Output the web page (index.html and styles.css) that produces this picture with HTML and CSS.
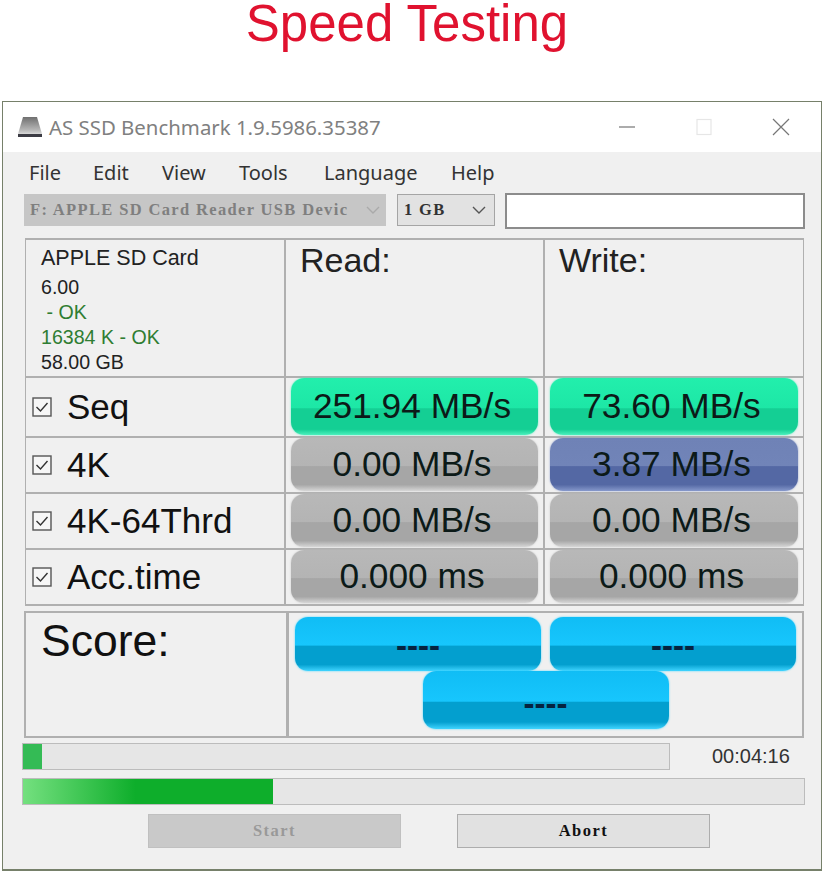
FILE: index.html
```html
<!DOCTYPE html>
<html lang="en">
<head>
    <meta charset="UTF-8">
    <meta name="viewport" content="width=device-width, initial-scale=1.0">
    <title>Speed Testing</title>
    <link rel="stylesheet" href="styles.css">
</head>
<body>

<h1 class="headline">Speed Testing</h1>

<div class="window">
    <!-- Title bar -->
    <div class="titlebar">
        <svg class="app-icon" width="26" height="22" viewBox="0 0 26 22">
            <defs>
                <linearGradient id="drive" x1="0" y1="0" x2="0" y2="1">
                    <stop offset="0" stop-color="#6f6f6f"/>
                    <stop offset="0.75" stop-color="#b5b5b5"/>
                    <stop offset="1" stop-color="#d8d8d8"/>
                </linearGradient>
            </defs>
            <path d="M6 1H20L25 18H1Z" fill="url(#drive)"/>
            <rect x="1" y="18" width="24" height="3" fill="#3c3c44"/>
        </svg>
        <span class="title-text">AS SSD Benchmark 1.9.5986.35387</span>
        <div class="window-controls">
            <svg width="18" height="18" viewBox="0 0 18 18"><path d="M1 9H17" stroke="#888" stroke-width="1.4"/></svg>
            <svg width="18" height="18" viewBox="0 0 18 18"><rect x="2" y="1.5" width="14" height="15" fill="none" stroke="#e6e6e6" stroke-width="1.2"/></svg>
            <svg width="18" height="18" viewBox="0 0 18 18"><path d="M1 1L17 17M17 1L1 17" stroke="#777" stroke-width="1.2"/></svg>
        </div>
    </div>

    <div class="content">
        <!-- Menu -->
        <div class="menu">
            <span class="m-file">File</span>
            <span class="m-edit">Edit</span>
            <span class="m-view">View</span>
            <span class="m-tools">Tools</span>
            <span class="m-lang">Language</span>
            <span>Help</span>
        </div>

        <!-- Drive and size selection -->
        <div class="selectors">
            <div class="combo combo-drive">
                <span>F: APPLE SD Card Reader USB Devic</span>
                <svg width="14" height="8" viewBox="0 0 14 8"><path d="M1 1L7 7L13 1" fill="none" stroke="#aaa" stroke-width="1.4"/></svg>
            </div>
            <div class="combo combo-size">
                <span>1 GB</span>
                <svg width="14" height="8" viewBox="0 0 14 8"><path d="M1 1L7 7L13 1" fill="none" stroke="#555" stroke-width="1.4"/></svg>
            </div>
            <div class="text-box"></div>
        </div>

        <!-- Results table -->
        <div class="results">
            <div class="cell info">
                <div class="info-name">APPLE SD Card</div>
                <div>6.00</div>
                <div class="ok">&nbsp;- OK</div>
                <div class="ok">16384 K - OK</div>
                <div>58.00 GB</div>
            </div>
            <div class="cell col-title">Read:</div>
            <div class="cell col-title">Write:</div>

            <div class="cell row-label"><span class="check"><svg width="20" height="20" viewBox="0 0 20 20"><rect x="1" y="1" width="18" height="18" fill="#f6f6f6" stroke="#555" stroke-width="1.4"/><path d="M4.5 10L8.5 14L15.5 6" fill="none" stroke="#333" stroke-width="1.4"/></svg></span>Seq</div>
            <div class="cell pill-cell"><div class="pill green">251.94 MB/s</div></div>
            <div class="cell pill-cell"><div class="pill green">73.60 MB/s</div></div>

            <div class="cell row-label"><span class="check"><svg width="20" height="20" viewBox="0 0 20 20"><rect x="1" y="1" width="18" height="18" fill="#f6f6f6" stroke="#555" stroke-width="1.4"/><path d="M4.5 10L8.5 14L15.5 6" fill="none" stroke="#333" stroke-width="1.4"/></svg></span>4K</div>
            <div class="cell pill-cell"><div class="pill grey">0.00 MB/s</div></div>
            <div class="cell pill-cell"><div class="pill blue">3.87 MB/s</div></div>

            <div class="cell row-label"><span class="check"><svg width="20" height="20" viewBox="0 0 20 20"><rect x="1" y="1" width="18" height="18" fill="#f6f6f6" stroke="#555" stroke-width="1.4"/><path d="M4.5 10L8.5 14L15.5 6" fill="none" stroke="#333" stroke-width="1.4"/></svg></span>4K-64Thrd</div>
            <div class="cell pill-cell"><div class="pill grey">0.00 MB/s</div></div>
            <div class="cell pill-cell"><div class="pill grey">0.00 MB/s</div></div>

            <div class="cell row-label"><span class="check"><svg width="20" height="20" viewBox="0 0 20 20"><rect x="1" y="1" width="18" height="18" fill="#f6f6f6" stroke="#555" stroke-width="1.4"/><path d="M4.5 10L8.5 14L15.5 6" fill="none" stroke="#333" stroke-width="1.4"/></svg></span>Acc.time</div>
            <div class="cell pill-cell"><div class="pill grey">0.000 ms</div></div>
            <div class="cell pill-cell"><div class="pill grey">0.000 ms</div></div>
        </div>

        <!-- Score -->
        <div class="score">
            <div class="cell score-label">Score:</div>
            <div class="cell score-values">
                <div class="score-pill">----</div>
                <div class="score-pill">----</div>
                <div class="score-pill score-total">----</div>
            </div>
        </div>

        <!-- Progress -->
        <div class="progress-row">
            <div class="bar bar-short"><div class="fill fill-small" style="width: 3%"></div></div>
            <span class="time">00:04:16</span>
        </div>
        <div class="bar bar-long"><div class="fill fill-fade" style="width: 32%"></div></div>

        <!-- Buttons -->
        <div class="buttons">
            <div class="btn btn-off">Start</div>
            <div class="btn">Abort</div>
        </div>
    </div>
</div>

</body>
</html>
```

FILE: styles.css
```css
body {
    margin: 0;
    background-color: #fff;
    font-family: "Noto Sans", "Open Sans", sans-serif;
    color: #222;
}
.headline {
    margin: 0;
    height: 101px;
    box-sizing: border-box;
    padding-right: 10px;
    font-family: "Liberation Sans", Arial, sans-serif;
    font-size: 51px;
    font-weight: normal;
    line-height: 48px;
    text-align: center;
    color: #e0122f;
}
.window {
    margin: 0 2px;
    height: 770px;
    box-sizing: border-box;
    border: 1px solid #76806a;
    border-bottom-width: 2px;
    background-color: #f0f0f0;
}

/* title bar */
.titlebar {
    height: 50px;
    display: flex;
    align-items: center;
    padding-left: 14px;
    background-color: #fff;
}
.app-icon {
    margin-right: 6px;
}
.title-text {
    font-size: 20.4px;
    color: #808080;
}
.window-controls {
    margin-left: auto;
    margin-right: 31px;
    display: flex;
    gap: 59px;
}

/* menu and selectors */
.content {
    padding: 0 15px 0 19px;
}
.menu {
    height: 41px;
    display: flex;
    align-items: center;
    padding-left: 7px;
    font-size: 20px;
    color: #333;
}
.m-file { width: 64px; }
.m-edit { width: 69px; }
.m-view { width: 77px; }
.m-tools { width: 85px; }
.m-lang { width: 127px; }
.selectors {
    display: flex;
    align-items: center;
    height: 36px;
    margin: 0 -2px 9px 2px;
    font-family: "Liberation Serif", serif;
    font-size: 16.5px;
    font-weight: bold;
}
.combo {
    height: 32px;
    margin-bottom: 2px;
    box-sizing: border-box;
    display: flex;
    align-items: center;
    justify-content: space-between;
    padding: 0 6px;
    letter-spacing: 1.35px;
}
.combo-drive {
    width: 362px;
    margin-right: 11px;
    background-color: #c6c6c6;
    color: #7f7f7f;
}
.combo-size {
    width: 98px;
    margin-right: 10px;
    background-color: #e2e2e2;
    border: 1px solid #a5a5a5;
    color: #333;
    padding-right: 8px;
}
.text-box {
    width: 300px;
    height: 36px;
    box-sizing: border-box;
    background-color: #fff;
    border: 2px solid #8c8c8c;
}

/* results */
.results {
    display: grid;
    grid-template-columns: 260px 259px 260px;
    grid-template-rows: 138px 60px 56px 56px 56px;
    width: 779px;
    margin-left: 3px;
    border-bottom: 2px solid #b0b0b0;
}
.cell {
    box-sizing: border-box;
    border: 2px solid #b0b0b0;
    border-width: 2px 1px 0 1px;
    min-width: 0;
}
.info {
    padding: 4px 0 0 15px;
    font-family: "Liberation Sans", Arial, sans-serif;
    font-size: 19.6px;
    line-height: 25px;
}
.info-name {
    font-size: 21.5px;
    line-height: 28px;
    margin-bottom: 3px;
}
.ok {
    color: #2f7d32;
}
.col-title {
    padding: 0 0 0 14px;
    font-family: "Liberation Sans", Arial, sans-serif;
    font-size: 34px;
    line-height: 40px;
}
.row-label {
    display: flex;
    align-items: center;
    padding: 0 0 1px 6px;
    font-family: "Liberation Sans", Arial, sans-serif;
    font-size: 35px;
    color: #111;
}
.check {
    display: flex;
    margin-right: 15px;
}
.pill-cell {
    padding: 0 5px 1px 5px;
}
.pill {
    height: 100%;
    box-sizing: border-box;
    border-radius: 13px;
    padding: 0 5px 1px 0;
    display: flex;
    align-items: center;
    justify-content: center;
    font-family: "Liberation Sans", Arial, sans-serif;
    font-size: 35.3px;
    color: #0c1a18;
}
.green {
    background: linear-gradient(#22efac, #1de7a6 52%, #14cf94 54%, #14cf94 90%, #4cf0bd);
    box-shadow: 0 0 2px #4cf0bd;
}
.grey {
    background: linear-gradient(#b8b8b8, #b4b4b4 52%, #a6a6a6 54%, #a6a6a6 88%, #d6d6d6);
    box-shadow: 0 0 2px #c4c4c4;
}
.blue {
    background: linear-gradient(#6f82b6, #7184b8 52%, #5468a4 54%, #5468a4 88%, #8698cb);
    box-shadow: 0 0 2px #8698cb;
}

/* score */
.score {
    display: grid;
    grid-template-columns: 263px 517px;
    width: 780px;
    height: 125px;
    margin: 5px 0 0 2px;
    border-bottom: 2px solid #b0b0b0;
}
.score-label {
    padding: 4px 0 0 15px;
    font-family: "Liberation Sans", Arial, sans-serif;
    font-size: 44.5px;
    line-height: 48px;
    color: #111;
    border-left-width: 2px;
}
.score-values {
    display: flex;
    flex-wrap: wrap;
    justify-content: center;
    align-content: flex-start;
    padding-top: 4px;
    column-gap: 9px;
    border-right-width: 2px;
    border-left-width: 2px;
}
.score-pill {
    width: 246px;
    height: 54px;
    box-sizing: border-box;
    padding-top: 17px;
    border-radius: 13px;
    background: linear-gradient(#10bdf5, #17c6fd 52%, #039fcf 54%, #039fcf 88%, #3fd4ff);
    box-shadow: 0 0 2px #3fd4ff;
    font-family: "Liberation Sans", Arial, sans-serif;
    font-size: 33px;
    font-weight: bold;
    line-height: 24px;
    text-align: center;
    color: #06233f;
}
.score-total {
    height: 58px;
    padding-top: 21px;
}

/* progress */
.progress-row {
    display: flex;
    align-items: center;
    margin-top: 5px;
}
.bar {
    height: 27px;
    box-sizing: border-box;
    background-color: #e6e6e6;
    border: 1px solid #bcbcbc;
}
.bar-short {
    width: 648px;
}
.bar-long {
    width: 783px;
    margin-top: 8px;
}
.fill {
    height: 100%;
    background-color: #11b02e;
}
.fill-small {
    background-color: #34bb55;
}
.fill-fade {
    background: linear-gradient(90deg, #74e07f, #0eae2b 45%);
}
.time {
    margin-left: 42px;
    font-family: "Liberation Sans", Arial, sans-serif;
    font-size: 20px;
    color: #333;
}

/* buttons */
.buttons {
    display: flex;
    margin: 9px 0 0 126px;
    gap: 56px;
    font-family: "Liberation Serif", serif;
    font-size: 16.5px;
    font-weight: bold;
    letter-spacing: 1.5px;
}
.btn {
    width: 253px;
    height: 34px;
    box-sizing: border-box;
    display: flex;
    align-items: center;
    justify-content: center;
    background-color: #e1e1e1;
    border: 1px solid #adadad;
    color: #111;
}
.btn-off {
    background-color: #c9c9c9;
    border-color: #c0c0c0;
    color: #999;
}
```
